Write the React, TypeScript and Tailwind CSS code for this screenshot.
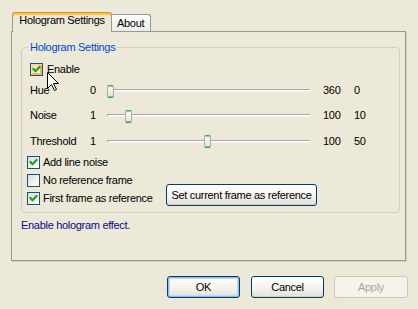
import React from "react";

function CheckBox({ checked, hover }: { checked?: boolean; hover?: boolean }) {
  return (
    <div className="w-[13px] h-[13px] shrink-0 border border-[#1C5180] bg-gradient-to-br from-[#DCDCD7] to-white relative">
      {hover && <div className="absolute inset-0 border-2 border-[#F8B848] border-t-[#FCD88A] border-l-[#FCD88A]" />}
      {checked && (
        <svg className="absolute inset-0" width="11" height="11" viewBox="0 0 11 11">
          <polyline points="2.5,5 4.5,7.2 8.5,3" fill="none" stroke="#21A121" strokeWidth="2.2" strokeLinecap="square" />
        </svg>
      )}
    </div>
  );
}

function Slider({ value, min, max }: { value: number; min: number; max: number }) {
  const left = Math.round(((value - min) / (max - min)) * 196);
  return (
    <div className="relative w-[203px] h-[14px] flex items-center">
      <div className="w-full h-[3px] rounded-[1px] border-t border-l border-[#A7A69F] border-b border-b-[#F4F3EE] bg-white" />
      <div
        className="absolute top-[1px] w-[7px] h-[13px] rounded-[2px] border border-x-[#A9B0A6] border-t-[#3FAA3A] border-b-[#2F9A2E] bg-gradient-to-b from-[#F9F9F6] to-[#E4E3DB] shadow-[inset_0_1px_0_#8FD48A,inset_0_-1px_0_#7CCB76]"
        style={{ left }}
      />
    </div>
  );
}

function SliderRow({ label, min, max, value, h }: { label: string; min: number; max: number; value: number; h: string }) {
  return (
    <div className={`flex items-center ml-[3px] ${h}`}>
      <span className="w-[60px]">{label}</span>
      <span className="w-[17px]">{min}</span>
      <Slider value={value} min={min} max={max} />
      <span className="ml-[13px] w-[31px]">{max}</span>
      <span>{value}</span>
    </div>
  );
}

function XPButton({ children, w, isDefault, disabled }: { children: React.ReactNode; w: string; isDefault?: boolean; disabled?: boolean }) {
  const base = disabled
    ? "border-[#C9C7BA] bg-[#F5F4EA] text-[#ACA899]"
    : "border-[#003C74] bg-gradient-to-b from-white via-[#F5F4F0] to-[#E3E1D6] text-black";
  const ring = isDefault ? "shadow-[inset_0_0_0_1px_#98B4E8,inset_0_0_0_2px_#C6DAF7]" : "shadow-[inset_0_-1px_0_#D6D0C5]";
  return (
    <div className={`${w} h-[22px] flex items-center justify-center rounded-[3px] border ${base} ${disabled ? "" : ring}`}>
      {children}
    </div>
  );
}

export default function App() {
  return (
    <div className="w-[418px] h-[309px] overflow-hidden relative bg-[#ECE9D8] text-black text-[11px] leading-[13px] tracking-[-0.3px] font-['Liberation_Sans',Arial,sans-serif] select-none">
      <div className="pt-[12px] pl-[11px]">
        {/* tabs */}
        <div className="flex items-end h-[19px]">
          <div className="ml-[1px] w-[100px] h-[20px] -mb-px relative z-10 bg-[#ECE9D8] border-x border-[#919B9C] border-t border-t-[#E68B2C] rounded-t-[3px] shadow-[inset_0_2px_0_#FFC73C] pt-[1px] text-center">
            Hologram Settings
          </div>
          <div className="w-[39px] h-[17px] border-t border-r border-[#919B9C] rounded-tr-[3px] bg-gradient-to-b from-white to-[#ECEBE6] pl-[5px] pt-[2px]">
            About
          </div>
        </div>

        {/* tab body */}
        <div className="w-[395px] h-[230px] border border-[#919B9C] shadow-[1px_1px_0_#D0CDBD]">
          <div className="ml-[9px] mt-[15px] w-[379px] h-[166px] border border-[#D0D0BF] rounded-[4px] relative pl-[5px] pt-[15px]">
            <span className="absolute left-[6px] -top-[7px] px-[2px] bg-[#ECE9D8] text-[#0046D5]">Hologram Settings</span>

            <div className="flex items-center h-[13px] ml-[3px]">
              <CheckBox checked hover />
              <span className="ml-[4px]">Enable</span>
            </div>

            <SliderRow label="Hue" min={0} max={360} value={0} h="mt-[2px] h-[25px]" />
            <SliderRow label="Noise" min={1} max={100} value={10} h="h-[25px]" />
            <SliderRow label="Threshold" min={1} max={100} value={50} h="h-[26px]" />

            <div className="flex items-end mt-[2px]">
              <div className="w-[139px] flex flex-col gap-[5px]">
                <div className="flex items-center h-[13px]">
                  <CheckBox checked />
                  <span className="ml-[3px]">Add line noise</span>
                </div>
                <div className="flex items-center h-[13px]">
                  <CheckBox />
                  <span className="ml-[3px] whitespace-nowrap">No reference frame</span>
                </div>
                <div className="flex items-center h-[13px]">
                  <CheckBox checked />
                  <span className="ml-[3px] whitespace-nowrap">First frame as reference</span>
                </div>
              </div>
              <div className="-mb-px">
                <XPButton w="w-[151px]">Set current frame as reference</XPButton>
              </div>
            </div>
          </div>

          <div className="ml-[9px] mt-[6px] text-[#0B0B8E]">Enable hologram effect.</div>
        </div>

        {/* dialog buttons */}
        <div className="flex mt-[15px] ml-[156px]">
          <XPButton w="w-[73px]" isDefault>OK</XPButton>
          <div className="ml-[11px]">
            <XPButton w="w-[73px]">Cancel</XPButton>
          </div>
          <div className="ml-[10px]">
            <XPButton w="w-[74px]" disabled>Apply</XPButton>
          </div>
        </div>
      </div>

      {/* mouse pointer */}
      <svg className="absolute left-[47px] top-[72px]" width="13" height="20" viewBox="0 0 13 20">
        <polygon points="0.5,0.5 0.5,16.5 4.5,12.5 7.5,18.5 9.5,17.5 6.5,11.5 11.5,11.5" fill="white" stroke="black" strokeWidth="1" strokeLinejoin="miter" />
      </svg>
    </div>
  );
}
